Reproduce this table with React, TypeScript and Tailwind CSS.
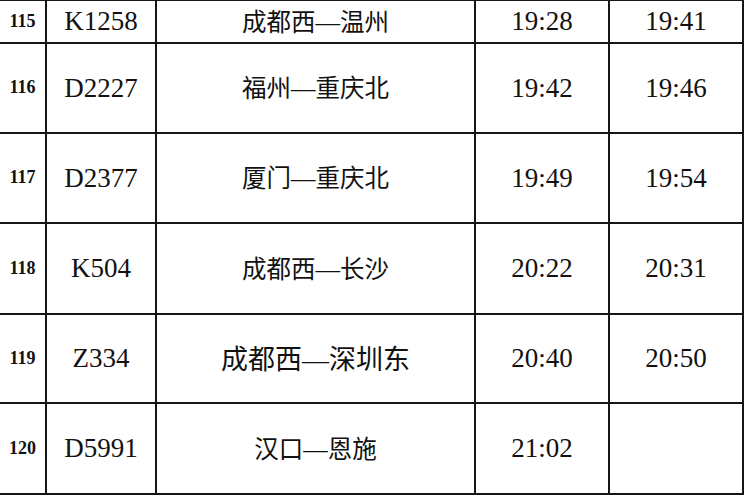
import React from 'react';

const rows = [
  { no: '115', train: 'K1258', from: '成都西', to: '温州', arrive: '19:28', depart: '19:41', h: 'h-[39px]', big: false },
  { no: '116', train: 'D2227', from: '福州', to: '重庆北', arrive: '19:42', depart: '19:46', h: 'h-[90px]', big: false },
  { no: '117', train: 'D2377', from: '厦门', to: '重庆北', arrive: '19:49', depart: '19:54', h: 'h-[90px]', big: false },
  { no: '118', train: 'K504', from: '成都西', to: '长沙', arrive: '20:22', depart: '20:31', h: 'h-[91px]', big: false },
  { no: '119', train: 'Z334', from: '成都西', to: '深圳东', arrive: '20:40', depart: '20:50', h: 'h-[89px]', big: true },
  { no: '120', train: 'D5991', from: '汉口', to: '恩施', arrive: '21:02', depart: '', h: 'h-[91px]', big: false },
];

const serif = { fontFamily: '"Liberation Serif", "Times New Roman", serif' };
const cjk = { fontFamily: '"Noto Sans CJK SC", "Noto Sans", sans-serif' };

export default function App() {
  return (
    <div className="w-[750px] h-[500px] bg-white overflow-hidden">
      <table className="table-fixed border-collapse -mt-px -ml-[2px] w-[744px] text-[#111]">
        <colgroup>
          <col className="w-[47px]" />
          <col className="w-[110px]" />
          <col className="w-[319px]" />
          <col className="w-[134px]" />
          <col className="w-[134px]" />
        </colgroup>
        <tbody>
          {rows.map((r) => (
            <tr key={r.no} className={r.h}>
              <td className="border-2 border-[#161616] text-center p-0 text-[18px] font-bold" style={serif}>
                {r.no}
              </td>
              <td className="border-2 border-[#161616] text-center p-0 text-[27px]" style={serif}>
                {r.train}
              </td>
              <td
                className={`border-2 border-[#161616] text-center p-0 pt-[2px] ${r.big ? 'text-[27px]' : 'text-[24.5px]'}`}
                style={cjk}
              >
                {r.from}
                <span style={serif}>—</span>
                {r.to}
              </td>
              <td className="border-2 border-[#161616] text-center p-0 text-[27px]" style={serif}>
                {r.arrive}
              </td>
              <td className="border-2 border-[#161616] text-center p-0 text-[27px]" style={serif}>
                {r.depart}
              </td>
            </tr>
          ))}
        </tbody>
      </table>
    </div>
  );
}
